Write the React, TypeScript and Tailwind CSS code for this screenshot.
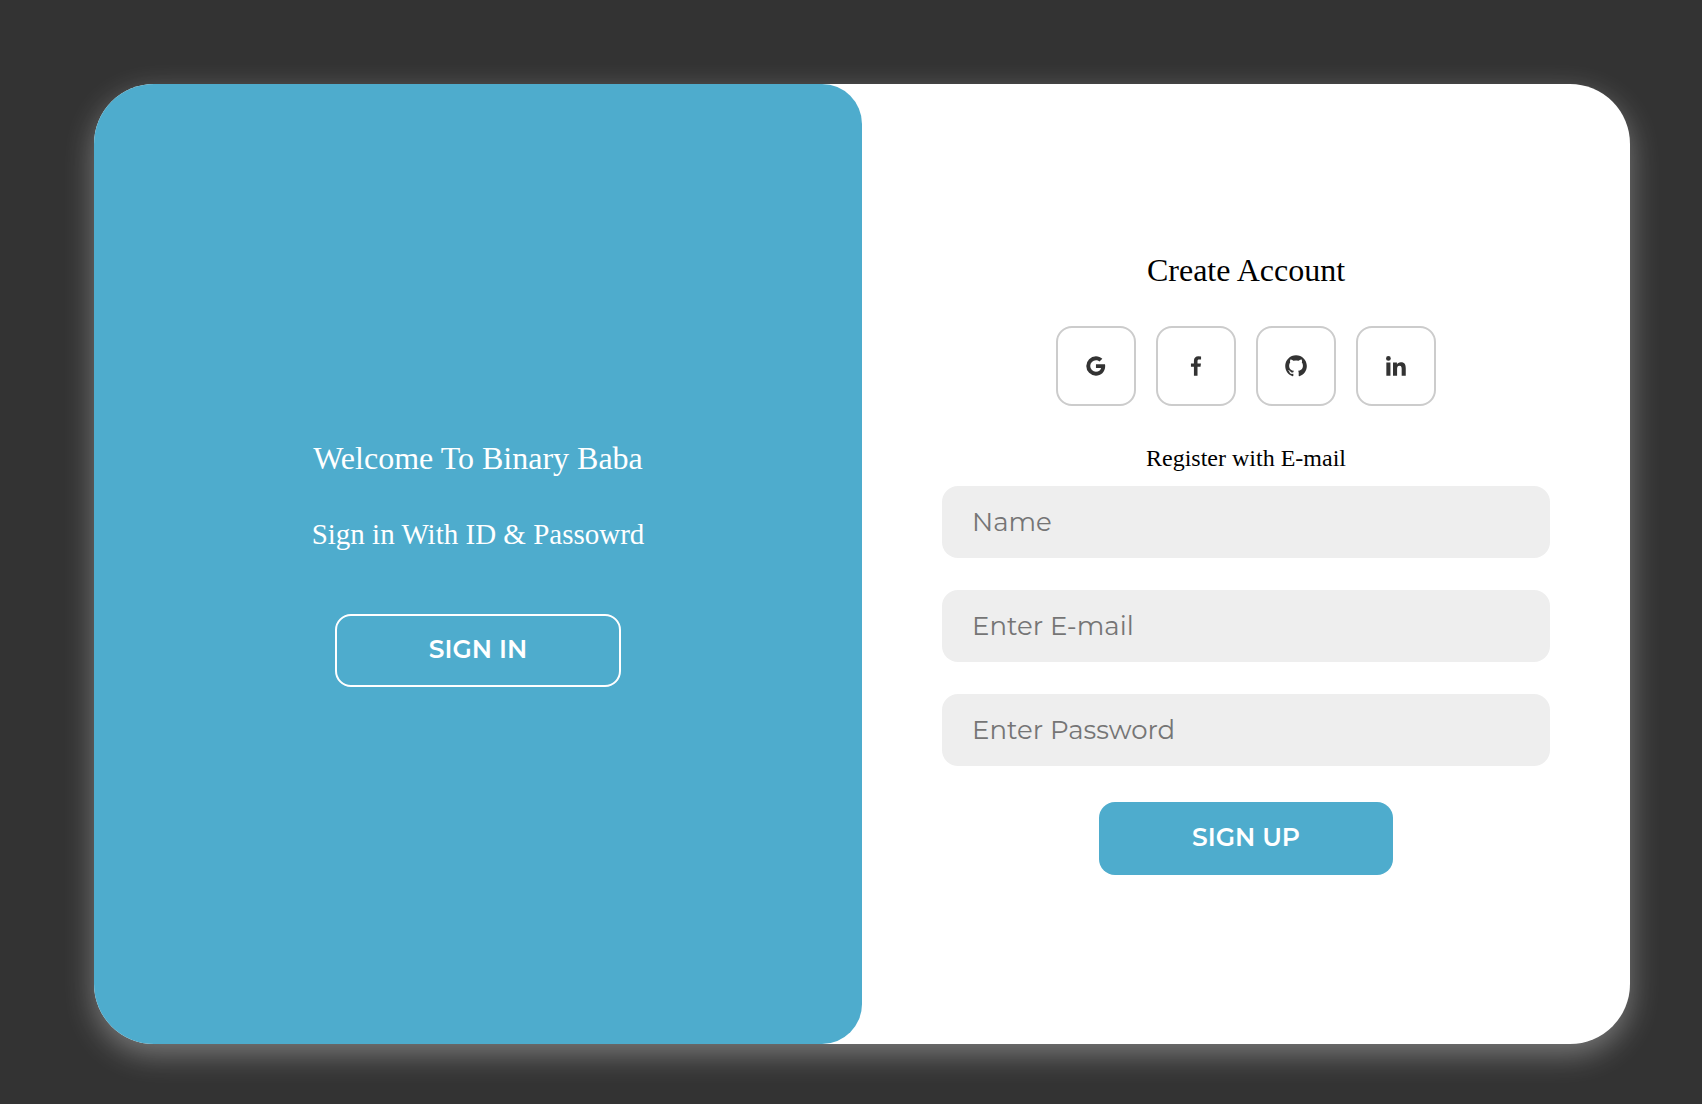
import type { IconType } from "react-icons";
import {
  BiLogoFacebook,
  BiLogoGithub,
  BiLogoGoogle,
  BiLogoLinkedin,
} from "react-icons/bi";

const socials: { label: string; Icon: IconType }[] = [
  { label: "Google", Icon: BiLogoGoogle },
  { label: "Facebook", Icon: BiLogoFacebook },
  { label: "GitHub", Icon: BiLogoGithub },
  { label: "LinkedIn", Icon: BiLogoLinkedin },
];

const fields = [
  { type: "text", label: "Name" },
  { type: "email", label: "Enter E-mail" },
  { type: "password", label: "Enter Password" },
];

function WelcomePanel() {
  return (
    <section className="flex flex-col items-center justify-center rounded-r-[40px] bg-[#4eaccd] px-8 pb-0.5 text-center font-['Liberation_Serif',serif] text-white">
      <h1 className="text-[32px] leading-9">Welcome To Binary Baba</h1>
      <p className="my-10 text-[29px] leading-9">Sign in With ID &amp; Passowrd</p>
      <button
        type="button"
        className="mt-[22px] h-[73px] w-[286px] rounded-2xl border-2 border-white font-['Montserrat','Inter',sans-serif] text-[25px] font-semibold uppercase"
      >
        Sign In
      </button>
    </section>
  );
}

function RegisterForm() {
  return (
    <form
      className="flex flex-col items-center justify-center px-20 pb-0.5 font-['Liberation_Serif',serif] text-black"
      onSubmit={(event) => event.preventDefault()}
    >
      <h1 className="text-[32px] leading-9">Create Account</h1>
      <div className="mt-[38px] mb-10 flex gap-5">
        {socials.map(({ label, Icon }) => (
          <a
            key={label}
            href="#"
            aria-label={label}
            className="flex size-20 items-center justify-center rounded-2xl border-2 border-[#ccc] text-[#333]"
          >
            <Icon className="size-[26px]" />
          </a>
        ))}
      </div>
      <p className="mb-4 text-2xl leading-6">Register with E-mail</p>
      <div className="flex w-full flex-col gap-8">
        {fields.map(({ type, label }) => (
          <input
            key={label}
            type={type}
            placeholder={label}
            aria-label={label}
            className="h-[72px] w-full rounded-2xl bg-[#eee] px-[30px] font-['Montserrat','Inter',sans-serif] text-[26px] outline-none placeholder:text-[#757575]"
          />
        ))}
      </div>
      <button
        type="submit"
        className="mt-9 h-[73px] w-[294px] rounded-2xl bg-[#4eaccd] font-['Montserrat','Inter',sans-serif] text-[25px] font-semibold text-white uppercase"
      >
        Sign Up
      </button>
    </form>
  );
}

export default function App() {
  return (
    <main className="flex min-h-screen items-center justify-center bg-[#333] pt-6 pl-[22px]">
      <div className="grid min-h-[960px] w-full max-w-[1536px] grid-cols-2 overflow-hidden rounded-[60px] bg-white shadow-[0_10px_30px_rgba(255,255,255,0.35)]">
        <WelcomePanel />
        <RegisterForm />
      </div>
    </main>
  );
}
